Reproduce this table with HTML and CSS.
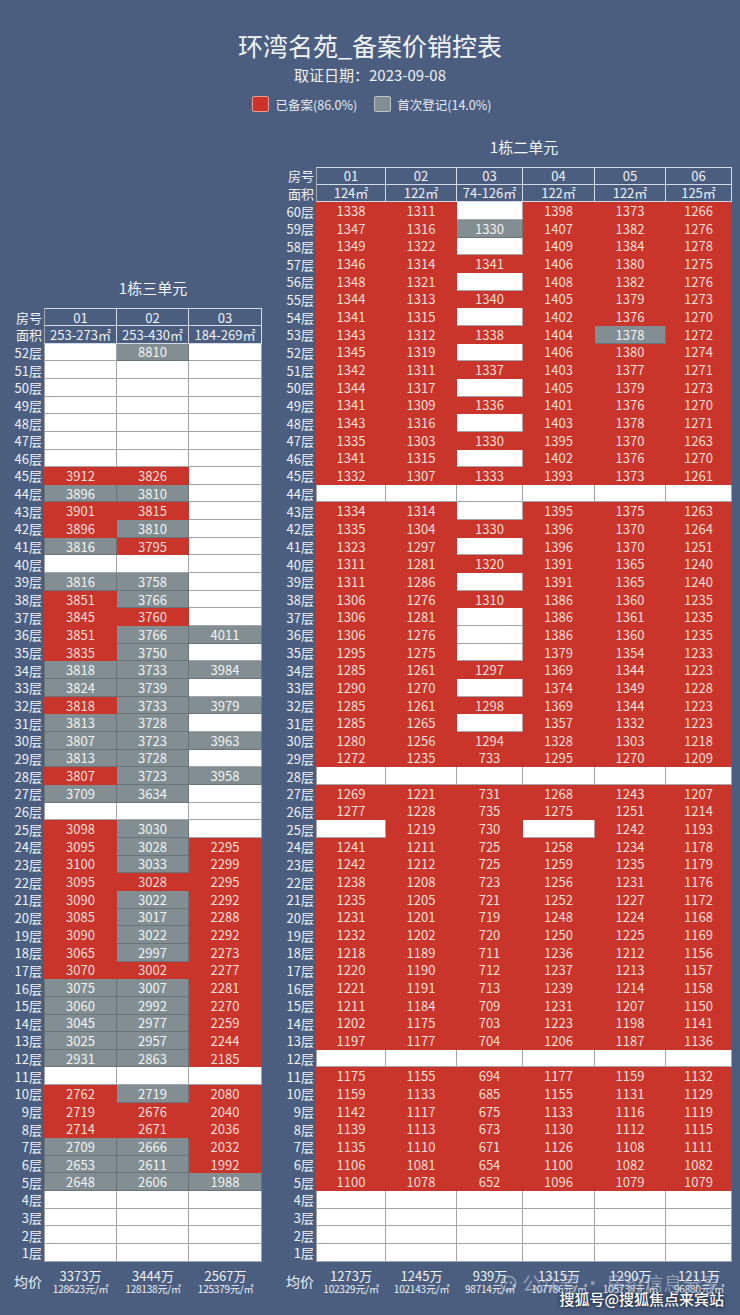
FILE: index.html
```html
<!DOCTYPE html>
<html lang="zh-CN">
<head>
<meta charset="utf-8">
<title>环湾名苑_备案价销控表</title>
<link rel="stylesheet" href="styles.css">
</head>
<body>
<div class="page">
  <h1 class="title">环湾名苑_备案价销控表</h1>
  <p class="date">取证日期：2023-09-08</p>
  <div class="legend">
    <span class="legend-item"><span class="swatch red"></span>已备案(86.0%)</span>
    <span class="legend-item"><span class="swatch grey"></span>首次登记(14.0%)</span>
  </div>

  <div class="units">
    <section class="unit unit-left">
      <div class="caption">1栋三单元</div>
      <table class="tb tb-left">
        <colgroup><col class="c-lbl"><col style="width:73px"><col style="width:72px"><col style="width:73px"></colgroup>
        <thead>
          <tr><th>房号</th><td>01</td><td>02</td><td>03</td></tr>
          <tr><th>面积</th><td>253-273㎡</td><td>253-430㎡</td><td>184-269㎡</td></tr>
        </thead>
        <tbody>
          <tr><th>52层</th><td></td><td class="g">8810</td><td></td></tr>
          <tr><th>51层</th><td></td><td></td><td></td></tr>
          <tr><th>50层</th><td></td><td></td><td></td></tr>
          <tr><th>49层</th><td></td><td></td><td></td></tr>
          <tr><th>48层</th><td></td><td></td><td></td></tr>
          <tr><th>47层</th><td></td><td></td><td></td></tr>
          <tr><th>46层</th><td></td><td></td><td></td></tr>
          <tr><th>45层</th><td class="r">3912</td><td class="r">3826</td><td></td></tr>
          <tr><th>44层</th><td class="g">3896</td><td class="g">3810</td><td></td></tr>
          <tr><th>43层</th><td class="r">3901</td><td class="r">3815</td><td></td></tr>
          <tr><th>42层</th><td class="r">3896</td><td class="g">3810</td><td></td></tr>
          <tr><th>41层</th><td class="g">3816</td><td class="r">3795</td><td></td></tr>
          <tr><th>40层</th><td></td><td></td><td></td></tr>
          <tr><th>39层</th><td class="g">3816</td><td class="g">3758</td><td></td></tr>
          <tr><th>38层</th><td class="r">3851</td><td class="g">3766</td><td></td></tr>
          <tr><th>37层</th><td class="r">3845</td><td class="r">3760</td><td></td></tr>
          <tr><th>36层</th><td class="r">3851</td><td class="g">3766</td><td class="g">4011</td></tr>
          <tr><th>35层</th><td class="r">3835</td><td class="g">3750</td><td></td></tr>
          <tr><th>34层</th><td class="g">3818</td><td class="g">3733</td><td class="g">3984</td></tr>
          <tr><th>33层</th><td class="g">3824</td><td class="g">3739</td><td></td></tr>
          <tr><th>32层</th><td class="r">3818</td><td class="g">3733</td><td class="g">3979</td></tr>
          <tr><th>31层</th><td class="g">3813</td><td class="g">3728</td><td></td></tr>
          <tr><th>30层</th><td class="g">3807</td><td class="g">3723</td><td class="g">3963</td></tr>
          <tr><th>29层</th><td class="g">3813</td><td class="g">3728</td><td></td></tr>
          <tr><th>28层</th><td class="r">3807</td><td class="g">3723</td><td class="g">3958</td></tr>
          <tr><th>27层</th><td class="g">3709</td><td class="g">3634</td><td></td></tr>
          <tr><th>26层</th><td></td><td></td><td></td></tr>
          <tr><th>25层</th><td class="r">3098</td><td class="g">3030</td><td></td></tr>
          <tr><th>24层</th><td class="r">3095</td><td class="g">3028</td><td class="r">2295</td></tr>
          <tr><th>23层</th><td class="r">3100</td><td class="g">3033</td><td class="r">2299</td></tr>
          <tr><th>22层</th><td class="r">3095</td><td class="r">3028</td><td class="r">2295</td></tr>
          <tr><th>21层</th><td class="r">3090</td><td class="g">3022</td><td class="r">2292</td></tr>
          <tr><th>20层</th><td class="r">3085</td><td class="g">3017</td><td class="r">2288</td></tr>
          <tr><th>19层</th><td class="r">3090</td><td class="g">3022</td><td class="r">2292</td></tr>
          <tr><th>18层</th><td class="r">3065</td><td class="g">2997</td><td class="r">2273</td></tr>
          <tr><th>17层</th><td class="r">3070</td><td class="r">3002</td><td class="r">2277</td></tr>
          <tr><th>16层</th><td class="g">3075</td><td class="g">3007</td><td class="r">2281</td></tr>
          <tr><th>15层</th><td class="g">3060</td><td class="g">2992</td><td class="r">2270</td></tr>
          <tr><th>14层</th><td class="g">3045</td><td class="g">2977</td><td class="r">2259</td></tr>
          <tr><th>13层</th><td class="g">3025</td><td class="g">2957</td><td class="r">2244</td></tr>
          <tr><th>12层</th><td class="g">2931</td><td class="g">2863</td><td class="r">2185</td></tr>
          <tr><th>11层</th><td></td><td></td><td></td></tr>
          <tr><th>10层</th><td class="r">2762</td><td class="g">2719</td><td class="r">2080</td></tr>
          <tr><th>9层</th><td class="r">2719</td><td class="r">2676</td><td class="r">2040</td></tr>
          <tr><th>8层</th><td class="r">2714</td><td class="r">2671</td><td class="r">2036</td></tr>
          <tr><th>7层</th><td class="g">2709</td><td class="g">2666</td><td class="r">2032</td></tr>
          <tr><th>6层</th><td class="g">2653</td><td class="g">2611</td><td class="r">1992</td></tr>
          <tr><th>5层</th><td class="g">2648</td><td class="g">2606</td><td class="g">1988</td></tr>
          <tr><th>4层</th><td></td><td></td><td></td></tr>
          <tr><th>3层</th><td></td><td></td><td></td></tr>
          <tr><th>2层</th><td></td><td></td><td></td></tr>
          <tr><th>1层</th><td></td><td></td><td></td></tr>
        </tbody>
        <tfoot>
          <tr class="avg"><th>均价</th>
            <td><div class="avg-total">3373万</div><div class="avg-unit">128623元/㎡</div></td>
            <td><div class="avg-total">3444万</div><div class="avg-unit">128138元/㎡</div></td>
            <td><div class="avg-total">2567万</div><div class="avg-unit">125379元/㎡</div></td>
          </tr>
        </tfoot>
      </table>
    </section>

    <section class="unit unit-right">
      <div class="caption">1栋二单元</div>
      <table class="tb tb-right">
        <colgroup><col class="c-lbl2"><col style="width:70px"><col style="width:71px"><col style="width:66px"><col style="width:72px"><col style="width:71px"><col style="width:66px"></colgroup>
        <thead>
          <tr><th>房号</th><td>01</td><td>02</td><td>03</td><td>04</td><td>05</td><td>06</td></tr>
          <tr><th>面积</th><td>124㎡</td><td>122㎡</td><td>74-126㎡</td><td>122㎡</td><td>122㎡</td><td>125㎡</td></tr>
        </thead>
        <tbody>
          <tr><th>60层</th><td class="r">1338</td><td class="r">1311</td><td></td><td class="r">1398</td><td class="r">1373</td><td class="r">1266</td></tr>
          <tr><th>59层</th><td class="r">1347</td><td class="r">1316</td><td class="g">1330</td><td class="r">1407</td><td class="r">1382</td><td class="r">1276</td></tr>
          <tr><th>58层</th><td class="r">1349</td><td class="r">1322</td><td></td><td class="r">1409</td><td class="r">1384</td><td class="r">1278</td></tr>
          <tr><th>57层</th><td class="r">1346</td><td class="r">1314</td><td class="r">1341</td><td class="r">1406</td><td class="r">1380</td><td class="r">1275</td></tr>
          <tr><th>56层</th><td class="r">1348</td><td class="r">1321</td><td></td><td class="r">1408</td><td class="r">1382</td><td class="r">1276</td></tr>
          <tr><th>55层</th><td class="r">1344</td><td class="r">1313</td><td class="r">1340</td><td class="r">1405</td><td class="r">1379</td><td class="r">1273</td></tr>
          <tr><th>54层</th><td class="r">1341</td><td class="r">1315</td><td></td><td class="r">1402</td><td class="r">1376</td><td class="r">1270</td></tr>
          <tr><th>53层</th><td class="r">1343</td><td class="r">1312</td><td class="r">1338</td><td class="r">1404</td><td class="g">1378</td><td class="r">1272</td></tr>
          <tr><th>52层</th><td class="r">1345</td><td class="r">1319</td><td></td><td class="r">1406</td><td class="r">1380</td><td class="r">1274</td></tr>
          <tr><th>51层</th><td class="r">1342</td><td class="r">1311</td><td class="r">1337</td><td class="r">1403</td><td class="r">1377</td><td class="r">1271</td></tr>
          <tr><th>50层</th><td class="r">1344</td><td class="r">1317</td><td></td><td class="r">1405</td><td class="r">1379</td><td class="r">1273</td></tr>
          <tr><th>49层</th><td class="r">1341</td><td class="r">1309</td><td class="r">1336</td><td class="r">1401</td><td class="r">1376</td><td class="r">1270</td></tr>
          <tr><th>48层</th><td class="r">1343</td><td class="r">1316</td><td></td><td class="r">1403</td><td class="r">1378</td><td class="r">1271</td></tr>
          <tr><th>47层</th><td class="r">1335</td><td class="r">1303</td><td class="r">1330</td><td class="r">1395</td><td class="r">1370</td><td class="r">1263</td></tr>
          <tr><th>46层</th><td class="r">1341</td><td class="r">1315</td><td></td><td class="r">1402</td><td class="r">1376</td><td class="r">1270</td></tr>
          <tr><th>45层</th><td class="r">1332</td><td class="r">1307</td><td class="r">1333</td><td class="r">1393</td><td class="r">1373</td><td class="r">1261</td></tr>
          <tr><th>44层</th><td></td><td></td><td></td><td></td><td></td><td></td></tr>
          <tr><th>43层</th><td class="r">1334</td><td class="r">1314</td><td></td><td class="r">1395</td><td class="r">1375</td><td class="r">1263</td></tr>
          <tr><th>42层</th><td class="r">1335</td><td class="r">1304</td><td class="r">1330</td><td class="r">1396</td><td class="r">1370</td><td class="r">1264</td></tr>
          <tr><th>41层</th><td class="r">1323</td><td class="r">1297</td><td></td><td class="r">1396</td><td class="r">1370</td><td class="r">1251</td></tr>
          <tr><th>40层</th><td class="r">1311</td><td class="r">1281</td><td class="r">1320</td><td class="r">1391</td><td class="r">1365</td><td class="r">1240</td></tr>
          <tr><th>39层</th><td class="r">1311</td><td class="r">1286</td><td></td><td class="r">1391</td><td class="r">1365</td><td class="r">1240</td></tr>
          <tr><th>38层</th><td class="r">1306</td><td class="r">1276</td><td class="r">1310</td><td class="r">1386</td><td class="r">1360</td><td class="r">1235</td></tr>
          <tr><th>37层</th><td class="r">1306</td><td class="r">1281</td><td></td><td class="r">1386</td><td class="r">1361</td><td class="r">1235</td></tr>
          <tr><th>36层</th><td class="r">1306</td><td class="r">1276</td><td></td><td class="r">1386</td><td class="r">1360</td><td class="r">1235</td></tr>
          <tr><th>35层</th><td class="r">1295</td><td class="r">1275</td><td></td><td class="r">1379</td><td class="r">1354</td><td class="r">1233</td></tr>
          <tr><th>34层</th><td class="r">1285</td><td class="r">1261</td><td class="r">1297</td><td class="r">1369</td><td class="r">1344</td><td class="r">1223</td></tr>
          <tr><th>33层</th><td class="r">1290</td><td class="r">1270</td><td></td><td class="r">1374</td><td class="r">1349</td><td class="r">1228</td></tr>
          <tr><th>32层</th><td class="r">1285</td><td class="r">1261</td><td class="r">1298</td><td class="r">1369</td><td class="r">1344</td><td class="r">1223</td></tr>
          <tr><th>31层</th><td class="r">1285</td><td class="r">1265</td><td></td><td class="r">1357</td><td class="r">1332</td><td class="r">1223</td></tr>
          <tr><th>30层</th><td class="r">1280</td><td class="r">1256</td><td class="r">1294</td><td class="r">1328</td><td class="r">1303</td><td class="r">1218</td></tr>
          <tr><th>29层</th><td class="r">1272</td><td class="r">1235</td><td class="r">733</td><td class="r">1295</td><td class="r">1270</td><td class="r">1209</td></tr>
          <tr><th>28层</th><td></td><td></td><td></td><td></td><td></td><td></td></tr>
          <tr><th>27层</th><td class="r">1269</td><td class="r">1221</td><td class="r">731</td><td class="r">1268</td><td class="r">1243</td><td class="r">1207</td></tr>
          <tr><th>26层</th><td class="r">1277</td><td class="r">1228</td><td class="r">735</td><td class="r">1275</td><td class="r">1251</td><td class="r">1214</td></tr>
          <tr><th>25层</th><td></td><td class="r">1219</td><td class="r">730</td><td></td><td class="r">1242</td><td class="r">1193</td></tr>
          <tr><th>24层</th><td class="r">1241</td><td class="r">1211</td><td class="r">725</td><td class="r">1258</td><td class="r">1234</td><td class="r">1178</td></tr>
          <tr><th>23层</th><td class="r">1242</td><td class="r">1212</td><td class="r">725</td><td class="r">1259</td><td class="r">1235</td><td class="r">1179</td></tr>
          <tr><th>22层</th><td class="r">1238</td><td class="r">1208</td><td class="r">723</td><td class="r">1256</td><td class="r">1231</td><td class="r">1176</td></tr>
          <tr><th>21层</th><td class="r">1235</td><td class="r">1205</td><td class="r">721</td><td class="r">1252</td><td class="r">1227</td><td class="r">1172</td></tr>
          <tr><th>20层</th><td class="r">1231</td><td class="r">1201</td><td class="r">719</td><td class="r">1248</td><td class="r">1224</td><td class="r">1168</td></tr>
          <tr><th>19层</th><td class="r">1232</td><td class="r">1202</td><td class="r">720</td><td class="r">1250</td><td class="r">1225</td><td class="r">1169</td></tr>
          <tr><th>18层</th><td class="r">1218</td><td class="r">1189</td><td class="r">711</td><td class="r">1236</td><td class="r">1212</td><td class="r">1156</td></tr>
          <tr><th>17层</th><td class="r">1220</td><td class="r">1190</td><td class="r">712</td><td class="r">1237</td><td class="r">1213</td><td class="r">1157</td></tr>
          <tr><th>16层</th><td class="r">1221</td><td class="r">1191</td><td class="r">713</td><td class="r">1239</td><td class="r">1214</td><td class="r">1158</td></tr>
          <tr><th>15层</th><td class="r">1211</td><td class="r">1184</td><td class="r">709</td><td class="r">1231</td><td class="r">1207</td><td class="r">1150</td></tr>
          <tr><th>14层</th><td class="r">1202</td><td class="r">1175</td><td class="r">703</td><td class="r">1223</td><td class="r">1198</td><td class="r">1141</td></tr>
          <tr><th>13层</th><td class="r">1197</td><td class="r">1177</td><td class="r">704</td><td class="r">1206</td><td class="r">1187</td><td class="r">1136</td></tr>
          <tr><th>12层</th><td></td><td></td><td></td><td></td><td></td><td></td></tr>
          <tr><th>11层</th><td class="r">1175</td><td class="r">1155</td><td class="r">694</td><td class="r">1177</td><td class="r">1159</td><td class="r">1132</td></tr>
          <tr><th>10层</th><td class="r">1159</td><td class="r">1133</td><td class="r">685</td><td class="r">1155</td><td class="r">1131</td><td class="r">1129</td></tr>
          <tr><th>9层</th><td class="r">1142</td><td class="r">1117</td><td class="r">675</td><td class="r">1133</td><td class="r">1116</td><td class="r">1119</td></tr>
          <tr><th>8层</th><td class="r">1139</td><td class="r">1113</td><td class="r">673</td><td class="r">1130</td><td class="r">1112</td><td class="r">1115</td></tr>
          <tr><th>7层</th><td class="r">1135</td><td class="r">1110</td><td class="r">671</td><td class="r">1126</td><td class="r">1108</td><td class="r">1111</td></tr>
          <tr><th>6层</th><td class="r">1106</td><td class="r">1081</td><td class="r">654</td><td class="r">1100</td><td class="r">1082</td><td class="r">1082</td></tr>
          <tr><th>5层</th><td class="r">1100</td><td class="r">1078</td><td class="r">652</td><td class="r">1096</td><td class="r">1079</td><td class="r">1079</td></tr>
          <tr><th>4层</th><td></td><td></td><td></td><td></td><td></td><td></td></tr>
          <tr><th>3层</th><td></td><td></td><td></td><td></td><td></td><td></td></tr>
          <tr><th>2层</th><td></td><td></td><td></td><td></td><td></td><td></td></tr>
          <tr><th>1层</th><td></td><td></td><td></td><td></td><td></td><td></td></tr>
        </tbody>
        <tfoot>
          <tr class="avg"><th>均价</th>
            <td><div class="avg-total">1273万</div><div class="avg-unit">102329元/㎡</div></td>
            <td><div class="avg-total">1245万</div><div class="avg-unit">102143元/㎡</div></td>
            <td><div class="avg-total">939万</div><div class="avg-unit">98714元/㎡</div></td>
            <td><div class="avg-total">1315万</div><div class="avg-unit">107786元/㎡</div></td>
            <td><div class="avg-total">1290万</div><div class="avg-unit">105738元/㎡</div></td>
            <td><div class="avg-total">1211万</div><div class="avg-unit">96880元/㎡</div></td>
          </tr>
        </tfoot>
      </table>
    </section>
  </div>

  <div class="wm-faint">
    <svg class="wm-icon" viewBox="0 0 20 20" width="17" height="17" aria-hidden="true"><circle cx="10" cy="10" r="8.5" fill="none" stroke="currentColor" stroke-width="2"/><circle cx="7" cy="9" r="1.6" fill="currentColor"/><circle cx="13" cy="9" r="1.6" fill="currentColor"/></svg>
    <span>公众号 · 房价信息分享</span>
  </div>
  <div class="wm-sohu">搜狐号@搜狐焦点来宾站</div>
</div>
</body>
</html>
```

FILE: styles.css
```css
* { box-sizing: border-box; }
html, body { margin: 0; padding: 0; }
body {
  background: #4b5e80;
  font-family: "Noto Sans CJK SC", "Noto Sans", sans-serif;
  color: #eef1f6;
  width: 740px;
}
.page {
  position: relative;
  height: 1315px;
  padding-top: 30px;
  overflow: hidden;
}
.title {
  margin: 0;
  text-align: center;
  font-size: 25px;
  line-height: 30px;
  font-weight: 400;
  color: #f2f4f8;
}
.date {
  margin: 5px 0 0;
  text-align: center;
  font-size: 15px;
  line-height: 20px;
  color: #eef1f6;
}
.legend {
  display: flex;
  justify-content: center;
  gap: 17px;
  margin-top: 10px;
  height: 18px;
  align-items: center;
  font-size: 12.5px;
  color: #e6eaf1;
  padding-left: 4px;
}
.legend-item { display: flex; align-items: center; gap: 6px; }
.swatch { width: 17px; height: 16px; border-radius: 2px; border: 1px solid; }
.swatch.red { background: #cc3429; border-color: #ec9a92; }
.swatch.grey { background: #838e92; border-color: #bfc6c9; }

.units {
  display: flex;
  align-items: flex-end;
  gap: 21px;
  margin: 24px 0 0 10px;
}
.caption {
  font-size: 15px;
  line-height: 20px;
  text-align: center;
  margin-bottom: 10px;
  color: #f0f3f7;
}
.unit-left .caption { padding-left: 34px; }
.unit-right .caption { padding-left: 33px; }

.tb {
  border-collapse: separate;
  border-spacing: 0;
  table-layout: fixed;
}
.tb-left { width: 252px; }
.tb-right { width: 449px; }
.c-lbl { width: 34px; }
.c-lbl2 { width: 33px; }
.tb tr { height: 17.66px; }
.tb th {
  font-weight: 400;
  text-align: right;
  padding: 0 2px 0 0;
  font-size: 13px;
  line-height: 15px;
  color: #eef1f6;
  white-space: nowrap;
}
.tb td {
  padding: 0;
  text-align: center;
  font-size: 13px;
  line-height: 15px;
  background: #ffffff;
  color: #ffffff;
  border-right: 1px solid #a2a6ac;
  border-bottom: 1px solid #a2a6ac;
  white-space: nowrap;
}
.tb td:first-of-type { border-left: 1px solid #a2a6ac; }
.tb td.r { background: #c9352b; border-color: #c9352b; color: #f7ddd7; }
.tb td.g { background: #838e92; border-color: #68747a; color: #f1f3f3; }

.tb thead td {
  background: transparent;
  border-color: #d4dae3;
  color: #eef1f6;
}
.tb thead tr:first-child td { border-top: 1px solid #d4dae3; }

.tb .avg { height: 34px; }
.tb .avg th { vertical-align: middle; font-size: 14px; padding-top: 6px; }
.tb .avg td {
  background: transparent;
  border: 0;
  vertical-align: top;
  padding-top: 7px;
  color: #eef1f6;
}
.avg-total { font-size: 13px; line-height: 14px; }
.avg-unit { font-size: 10px; line-height: 12px; letter-spacing: -0.2px; }

.wm-faint {
  position: absolute;
  left: 500px;
  top: 1272px;
  display: flex;
  align-items: center;
  gap: 5px;
  font-size: 19px;
  line-height: 22px;
  color: rgba(205, 214, 228, 0.5);
  white-space: nowrap;
}
.wm-icon { display: block; }
.wm-sohu {
  position: absolute;
  right: 16px;
  top: 1289px;
  font-size: 15px;
  line-height: 20px;
  font-weight: 500;
  color: #ffffff;
  text-shadow: 0 0 3px rgba(20, 28, 45, 0.9), 0 0 6px rgba(20, 28, 45, 0.6);
  white-space: nowrap;
}
```
